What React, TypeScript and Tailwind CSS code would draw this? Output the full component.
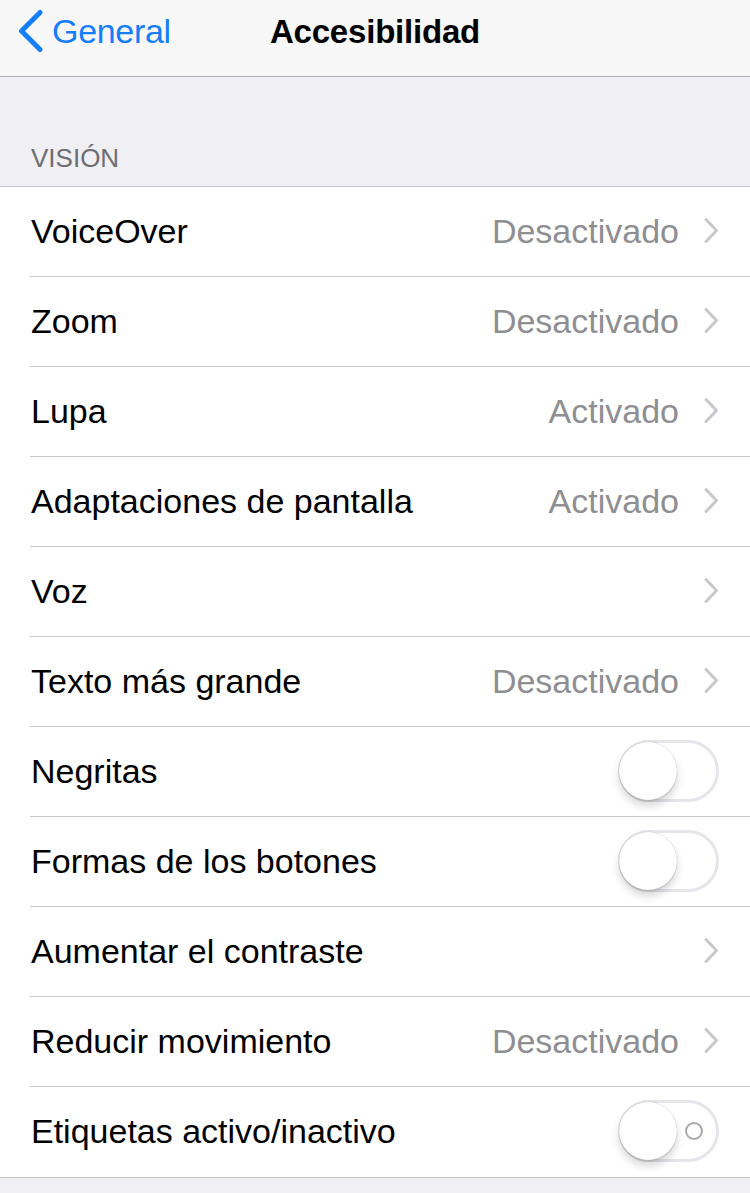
import React from "react";

type Row = { label: string; value?: string; chevron?: boolean; toggle?: boolean; labels?: boolean };

const rows: Row[] = [
  { label: "VoiceOver", value: "Desactivado", chevron: true },
  { label: "Zoom", value: "Desactivado", chevron: true },
  { label: "Lupa", value: "Activado", chevron: true },
  { label: "Adaptaciones de pantalla", value: "Activado", chevron: true },
  { label: "Voz", chevron: true },
  { label: "Texto más grande", value: "Desactivado", chevron: true },
  { label: "Negritas", toggle: true },
  { label: "Formas de los botones", toggle: true },
  { label: "Aumentar el contraste", chevron: true },
  { label: "Reducir movimiento", value: "Desactivado", chevron: true },
  { label: "Etiquetas activo/inactivo", toggle: true, labels: true },
];

function Chevron() {
  return (
    <svg width="16" height="27" viewBox="0 0 16 27" className="ml-[24px] shrink-0">
      <path d="M3 2.5 L13.5 13.5 L3 24.5" fill="none" stroke="#c7c7cc" strokeWidth="3" strokeLinecap="round" strokeLinejoin="round" />
    </svg>
  );
}

function Toggle({ labels }: { labels?: boolean }) {
  return (
    <div className="relative w-[101px] h-[62px] rounded-full border-[3px] border-[#e5e5ea] bg-white shrink-0">
      <div className="absolute left-[-2px] top-[-1px] w-[58px] h-[58px] rounded-full bg-white shadow-[0_6px_8px_rgba(0,0,0,0.16),0_0_1px_rgba(0,0,0,0.3),0_2px_1px_rgba(0,0,0,0.06)]" />
      {labels && (
        <div className="absolute left-[64px] top-[19px] w-[18px] h-[18px] rounded-full border-2 border-[#a8a8a8]" />
      )}
    </div>
  );
}

export default function App() {
  return (
    <div
      className="w-[750px] h-[1193px] bg-[#efeff4] overflow-hidden"
      style={{ fontFamily: '"Liberation Sans", Arial, sans-serif' }}
    >
      {/* Nav bar */}
      <div className="relative h-[77px] bg-[#f7f7f7] border-b border-[#b2b2b2] flex items-center pb-[14px]">
        <div className="flex items-center pl-[16px]">
          <svg width="28" height="44" viewBox="0 0 28 44" className="shrink-0">
            <path d="M24 3.5 L5.5 22 L24 40.5" fill="none" stroke="#147efb" strokeWidth="5" strokeLinecap="round" strokeLinejoin="round" />
          </svg>
          <span className="ml-[8px] text-[34px] leading-none text-[#147efb] tracking-[-0.3px]">General</span>
        </div>
        <div className="absolute inset-0 flex items-center justify-center pb-[14px]">
          <span className="text-[33px] leading-none font-bold text-black tracking-[-0.2px]">Accesibilidad</span>
        </div>
      </div>

      {/* Section header */}
      <div className="h-[110px] flex items-end pl-[31px] pb-[15px] border-b border-[#c8c7cc]">
        <span className="text-[26px] leading-none text-[#6d6d72]">VISIÓN</span>
      </div>

      {/* Rows */}
      <div className="bg-white border-b border-[#c8c7cc]">
        {rows.map((r, i) => {
          const last = i === rows.length - 1;
          return (
            <div key={r.label} className="pl-[30px]">
              <div
                className={
                  "h-[90px] flex items-center pr-[31px] pb-[2px] " +
                  (last ? "h-[89px]" : "border-b border-[#c8c7cc]")
                }
              >
                <span className="pl-[1px] text-[34px] leading-none text-black flex-1 whitespace-nowrap">{r.label}</span>
                {r.value && (
                  <span className="text-[34px] leading-none text-[#8e8e93] whitespace-nowrap">{r.value}</span>
                )}
                {r.chevron && <Chevron />}
                {r.toggle && <Toggle labels={r.labels} />}
              </div>
            </div>
          );
        })}
      </div>
    </div>
  );
}
